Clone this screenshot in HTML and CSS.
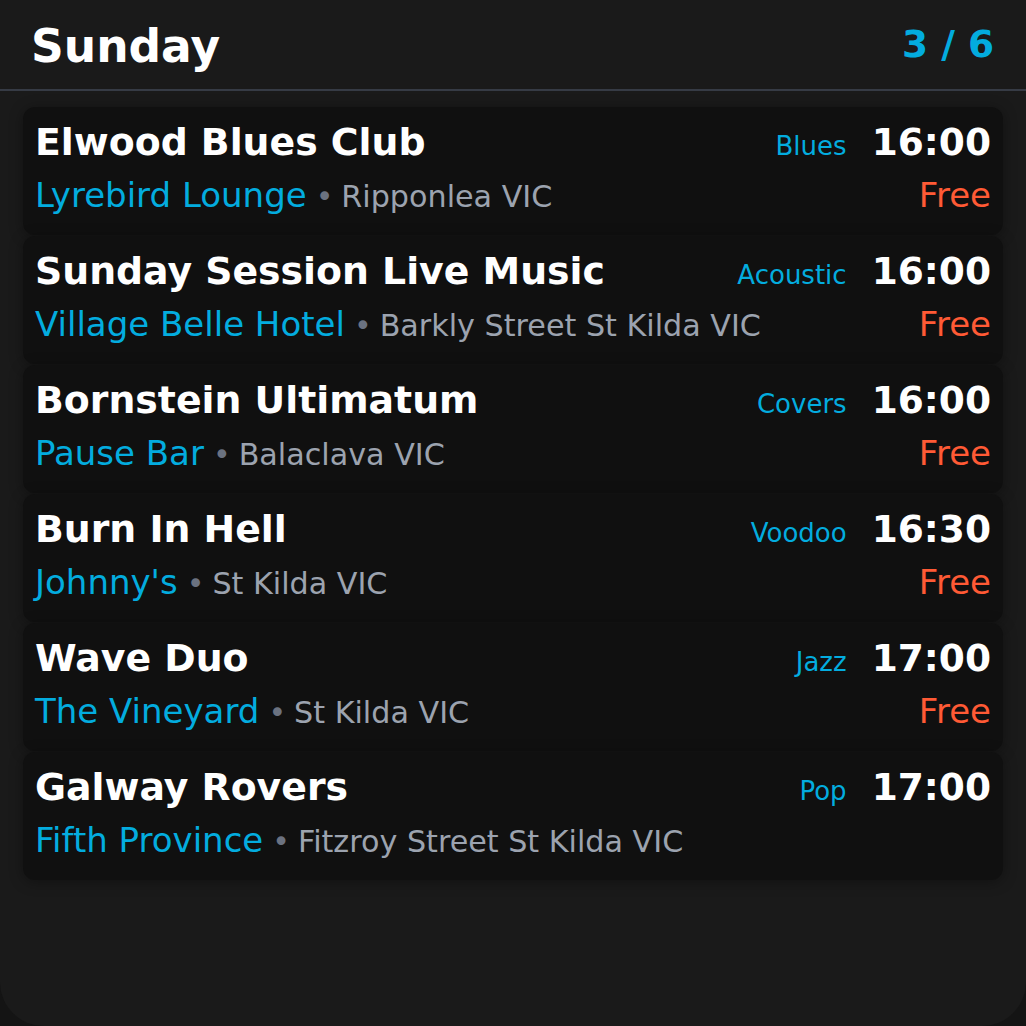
FILE: index.html
```html
<!DOCTYPE html>
<html lang="en">
<head>
<meta charset="utf-8">
<title>Sunday</title>
<link rel="stylesheet" href="styles.css">
</head>
<body>
<div class="app">
  <header class="header">
    <h1 class="day">Sunday</h1>
    <div class="counter">3 / 6</div>
  </header>
  <main class="list">
    <article class="card">
      <div class="row top">
        <span class="title">Elwood Blues Club</span>
        <span class="genre">Blues</span>
        <span class="time">16:00</span>
      </div>
      <div class="row bottom">
        <span class="place"><span class="venue">Lyrebird Lounge</span><span class="dot">•</span><span class="loc">Ripponlea VIC</span></span>
        <span class="price">Free</span>
      </div>
    </article>
    <article class="card">
      <div class="row top">
        <span class="title">Sunday Session Live Music</span>
        <span class="genre">Acoustic</span>
        <span class="time">16:00</span>
      </div>
      <div class="row bottom">
        <span class="place"><span class="venue">Village Belle Hotel</span><span class="dot">•</span><span class="loc">Barkly Street St Kilda VIC</span></span>
        <span class="price">Free</span>
      </div>
    </article>
    <article class="card">
      <div class="row top">
        <span class="title">Bornstein Ultimatum</span>
        <span class="genre">Covers</span>
        <span class="time">16:00</span>
      </div>
      <div class="row bottom">
        <span class="place"><span class="venue">Pause Bar</span><span class="dot">•</span><span class="loc">Balaclava VIC</span></span>
        <span class="price">Free</span>
      </div>
    </article>
    <article class="card">
      <div class="row top">
        <span class="title">Burn In Hell</span>
        <span class="genre">Voodoo</span>
        <span class="time">16:30</span>
      </div>
      <div class="row bottom">
        <span class="place"><span class="venue">Johnny's</span><span class="dot">•</span><span class="loc">St Kilda VIC</span></span>
        <span class="price">Free</span>
      </div>
    </article>
    <article class="card">
      <div class="row top">
        <span class="title">Wave Duo</span>
        <span class="genre">Jazz</span>
        <span class="time">17:00</span>
      </div>
      <div class="row bottom">
        <span class="place"><span class="venue">The Vineyard</span><span class="dot">•</span><span class="loc">St Kilda VIC</span></span>
        <span class="price">Free</span>
      </div>
    </article>
    <article class="card">
      <div class="row top">
        <span class="title">Galway Rovers</span>
        <span class="genre">Pop</span>
        <span class="time">17:00</span>
      </div>
      <div class="row bottom">
        <span class="place"><span class="venue">Fifth Province</span><span class="dot">•</span><span class="loc">Fitzroy Street St Kilda VIC</span></span>
      </div>
    </article>
  </main>
</div>
</body>
</html>
```

FILE: styles.css
```css
* { box-sizing: border-box; }
html, body {
  margin: 0;
  padding: 0;
  background: #141414;
}
body {
  font-family: "DejaVu Sans", "Liberation Sans", sans-serif;
  color: #ffffff;
}
.app {
  width: 1026px;
  height: 1026px;
  background: #1a1a1a;
  border-radius: 0 0 44px 44px;
  overflow: hidden;
}
.header {
  display: flex;
  justify-content: space-between;
  align-items: flex-start;
  padding: 20px 32px 15px 31px;
  border-bottom: 2px solid #363b45;
  background: #1a1a1a;
}
.day {
  margin: 0;
  font-size: 45.5px;
  line-height: 54px;
  font-weight: bold;
}
.counter {
  margin-top: 2px;
  font-size: 37.5px;
  line-height: 44px;
  font-weight: bold;
  color: #03acdf;
}
.list {
  display: flex;
  flex-direction: column;
  gap: 1px;
  padding: 16px 23px 0 23px;
}
.card {
  height: 128px;
  background: #101010;
  border-radius: 12px;
  padding: 13px 12px 0 12px;
  box-shadow: 0 2px 14px rgba(0, 0, 0, 0.35);
}
.row {
  display: flex;
  align-items: baseline;
}
.top {
  height: 44px;
  line-height: 44px;
}
.bottom {
  margin-top: 11px;
  line-height: 40px;
}
.title {
  flex: 1;
  font-size: 37.8px;
  font-weight: bold;
  white-space: nowrap;
}
.genre {
  font-size: 26px;
  color: #03acdf;
  margin-right: 25px;
}
.time {
  font-size: 37.5px;
  font-weight: bold;
}
.place {
  flex: 1;
  white-space: nowrap;
}
.venue {
  font-size: 34px;
  color: #03acdf;
}
.dot {
  font-size: 30px;
  color: #6b7280;
  margin: 0 8px 0 9px;
}
.loc {
  font-size: 30.2px;
  color: #9ca3af;
}
.price {
  font-size: 34px;
  color: #ff5a35;
}
```
